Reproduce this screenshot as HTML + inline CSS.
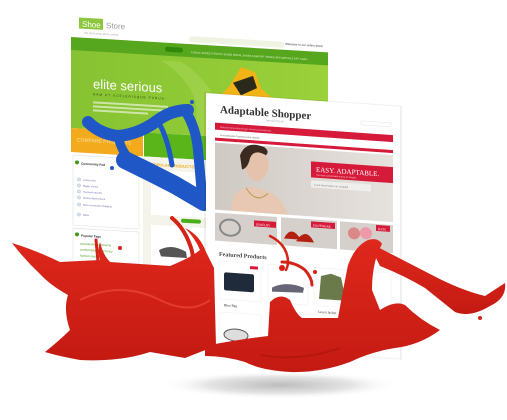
<!DOCTYPE html>
<html><head><meta charset="utf-8"><style>
html,body{margin:0;padding:0;background:#fff;width:507px;height:420px;overflow:hidden}
svg{display:block}
text{font-family:"Liberation Sans",sans-serif}
.sr{font-family:"Liberation Serif",serif}
</style></head><body>
<svg width="507" height="420" viewBox="0 0 507 420" xmlns="http://www.w3.org/2000/svg">
<defs>
<radialGradient id="sh" cx="50%" cy="50%" r="50%"><stop offset="0" stop-color="#bdbdbd"/><stop offset="0.6" stop-color="#e4e4e4"/><stop offset="1" stop-color="#fff" stop-opacity="0"/></radialGradient>
<linearGradient id="gb" x1="0" y1="0" x2="1" y2="0"><stop offset="0" stop-color="#86c232"/><stop offset="1" stop-color="#9bd13a"/></linearGradient>
<linearGradient id="hero" x1="0" y1="0" x2="1" y2="0"><stop offset="0" stop-color="#cfc9c3"/><stop offset="1" stop-color="#e6e2de"/></linearGradient>
<linearGradient id="red" x1="0" y1="0" x2="0" y2="1"><stop offset="0" stop-color="#e0281c"/><stop offset="1" stop-color="#c41a12"/></linearGradient>
</defs>
<ellipse cx="280" cy="385" rx="120" ry="14" fill="url(#sh)"/>

<!-- back page -->
<g transform="matrix(1,0.06,0,1,71,15)">
<rect x="0" y="0" width="257" height="255" fill="#fff"/>
<rect x="8" y="2" width="24" height="11" fill="#8cc63f"/>
<text x="11" y="11" font-size="8" fill="#fff">Shoe</text>
<text x="35" y="11" font-size="8" fill="#999">Store</text>
<text x="13" y="18" font-size="3" fill="#aaa">the best shoe store online</text>
<rect x="118" y="14" width="95" height="6" rx="3" fill="#eef3e2"/>
<text x="214" y="17" font-size="3" fill="#333">Welcome to our online store!</text>
<rect x="0" y="22" width="257" height="16" fill="#56a61e"/>
<rect x="94" y="26" width="18" height="5" rx="2.5" fill="#2f8a0c"/>
<text x="120" y="31" font-size="2.5" fill="#e5f5d0">CASUAL SHOES   ATHLETIC SHOES   BRIDAL SHOES   COMFORT SHOES   NEW ARRIVALS   GIFT CARD</text>
<rect x="0" y="35" width="257" height="78" fill="url(#gb)"/>
<path d="M90,40 Q140,70 120,113 L140,113 Q160,70 110,40Z" fill="#a9d85a" opacity="0.5"/>
<text x="22" y="72" font-size="13" fill="#fff" font-family="DejaVu Sans Condensed, Liberation Sans Narrow, sans-serif">elite serious</text>
<text x="22" y="79" font-size="3.2" fill="#2a4a10" letter-spacing="1">NAM UT SCELERISQUE PURUS.</text>
<rect x="22" y="85" width="75" height="2" fill="#cde6a8"/>
<rect x="22" y="89" width="70" height="2" fill="#cde6a8"/>
<rect x="22" y="93" width="55" height="2" fill="#cde6a8"/>
<path d="M134,110 L142,80 L158,62 L170,42 L184,46 L190,62 L212,80 L205,95 L180,92 L165,110Z" fill="#f2b316"/>
<path d="M162,58 L182,50 L186,62 L170,70Z" fill="#2a2a1a"/>
<rect x="0" y="113" width="72" height="24" fill="#f3aa1c"/>
<rect x="73" y="113" width="70" height="24" fill="#5ab51b"/>
<text x="6" y="126" font-size="5" fill="#fde1a0">COMPARE PRODUCTS</text>
<rect x="72" y="137" width="100" height="120" fill="#f4f4ea"/>
<rect x="2" y="140" width="66" height="70" fill="#fff" stroke="#e2e2e2" stroke-width="0.6"/>
<circle cx="6" cy="147" r="2" fill="#3e9c1a"/>
<text x="10" y="149" font-size="3.2" fill="#333" font-weight="bold">Community Poll</text>
<g fill="#dfe8ef" stroke="#9ab" stroke-width="0.4">
<circle cx="8" cy="164" r="1.6"/><circle cx="8" cy="170" r="1.6"/><circle cx="8" cy="176" r="1.6"/><circle cx="8" cy="182" r="1.6"/><circle cx="8" cy="189" r="1.6"/><circle cx="8" cy="199" r="1.6"/></g>
<g fill="#66a" font-size="2.5"><text x="12" y="165">Lower price</text><text x="12" y="171">Bigger choice</text><text x="12" y="177">Payment security</text><text x="12" y="183">30-day Money Back</text><text x="12" y="190">More convenient shipping</text><text x="12" y="200">Other</text></g>
<rect x="2" y="213" width="66" height="42" fill="#fff" stroke="#e2e2e2" stroke-width="0.6"/>
<circle cx="6" cy="219" r="2" fill="#3e9c1a"/>
<text x="10" y="221" font-size="3.2" fill="#333" font-weight="bold">Popular Tags</text>
<text x="9" y="229" font-size="3" fill="#4a9a1a">accessories community</text>
<text x="9" y="235" font-size="3" fill="#4a9a1a">comfortable shoes fancy</text>
<text x="9" y="241" font-size="3" fill="#4a9a1a">fashion sneakers</text>
<text x="80" y="146" font-size="4" fill="#f3aa1c" font-weight="bold">POPULAR PRODUCTS</text>
<rect x="80" y="150" width="55" height="45" fill="#fff"/>
<rect x="110" y="197" width="20" height="4" rx="2" fill="#4aad1a"/>
<rect x="80" y="205" width="55" height="45" fill="#fff"/>
<path d="M88,230 Q100,222 115,230 L116,236 L90,236Z" fill="#555"/>
</g>

<!-- blue splash -->
<g fill="none" stroke="#1f58c6" stroke-linecap="round" stroke-linejoin="round">
<path d="M88,122 Q100,134 118,136 Q140,134 158,120 Q172,110 188,110" stroke-width="12"/>
<path d="M125,160 Q150,172 175,185 Q192,195 204,202" stroke-width="18"/>
<path d="M186,112 Q196,128 198,150 Q200,172 202,195" stroke-width="10"/>
<path d="M118,135 Q120,150 132,162" stroke-width="9"/>
<path d="M160,125 Q168,140 172,165" stroke-width="5"/>
</g>
<circle cx="192" cy="102" r="2" fill="#1f58c6"/><circle cx="112" cy="168" r="2" fill="#1f58c6"/>

<!-- front page -->
<g transform="matrix(1,0.07,0,1,206,93)">
<rect x="-2" y="-1" width="198" height="254" fill="#000" opacity="0.06"/>
<rect x="0" y="0" width="194" height="252" fill="#fff"/>
<text x="14" y="19" font-size="11" class="sr" fill="#333" font-weight="bold">Adaptable Shopper</text>
<text x="60" y="24" font-size="3" class="sr" fill="#999" font-style="italic">one size fits all</text>
<rect x="155" y="17" width="30" height="4" fill="#fff" stroke="#ddd" stroke-width="0.4"/>
<rect x="9" y="29" width="178" height="7" fill="#d51a3a"/>
<text x="14" y="34" font-size="2.5" fill="#fbd">Watches   Bracelets   Rings   Jewelry   Accessories</text>
<rect x="9" y="44" width="178" height="3" fill="#d51a3a"/>
<text x="14" y="42" font-size="2.3" fill="#666">All   Accessories   Footwear   Hats   Jackets</text>
<rect x="9" y="49" width="178" height="67" fill="url(#hero)"/>
<path d="M38,62 Q48,48 60,58 Q66,70 58,80 Q52,88 44,82 Q38,74 38,62Z" fill="#e4c2ac"/>
<path d="M34,60 Q40,44 58,50 Q64,54 60,58 Q48,52 44,62 Q42,72 36,74Z" fill="#3a2a20"/>
<path d="M28,100 Q40,88 55,92 Q75,96 82,116 L24,116Z" fill="#e8c8b2"/>
<path d="M40,92 Q50,108 62,96" fill="none" stroke="#b89a4a" stroke-width="1"/>
<rect x="105" y="61" width="82" height="16" fill="#d51a3a"/>
<text x="110" y="71" font-size="7" class="sr" fill="#fff">EASY. ADAPTABLE.</text>
<text x="110" y="75" font-size="2.2" fill="#fcc">The most customizable theme for Shopify</text>
<rect x="105" y="80" width="60" height="7" fill="#f0eeec"/>
<text x="108" y="85" font-size="2.6" class="sr" fill="#666">Learn what features are included</text>
<rect x="9" y="119" width="62" height="28" fill="#d5d0cb"/>
<ellipse cx="24" cy="133" rx="10" ry="8" fill="none" stroke="#888" stroke-width="2"/>
<rect x="48" y="124" width="22" height="6" fill="#d51a3a"/>
<text x="50" y="129" font-size="3.2" class="sr" fill="#fff">JEWELRY</text>
<rect x="75" y="119" width="56" height="28" fill="#d5d0cb"/>
<path d="M78,140 Q85,125 95,140Z M90,142 Q100,126 108,142Z" fill="#b32010"/>
<rect x="105" y="121" width="24" height="6" fill="#d51a3a"/>
<text x="107" y="126" font-size="3.2" class="sr" fill="#fff">FOOTWEAR</text>
<rect x="134" y="119" width="53" height="28" fill="#d5d0cb"/>
<circle cx="148" cy="130" r="6" fill="#d88"/><circle cx="160" cy="129" r="6" fill="#e9a"/>
<rect x="170" y="120" width="14" height="6" fill="#d51a3a"/>
<text x="172" y="125" font-size="3.2" class="sr" fill="#fff">HATS</text>
<text x="13" y="162" font-size="6" class="sr" fill="#444" font-weight="bold">Featured Products</text>
<rect x="13" y="167" width="42" height="38" fill="#fff" stroke="#eee" stroke-width="0.5"/>
<rect x="18" y="178" width="30" height="18" rx="2" fill="#1f2a3a"/>
<rect x="62" y="167" width="40" height="38" fill="#fff" stroke="#eee" stroke-width="0.5"/>
<path d="M66,190 Q80,182 98,188 L97,193 L66,194Z" fill="#667"/>
<rect x="108" y="167" width="38" height="38" fill="#fff" stroke="#eee" stroke-width="0.5"/>
<path d="M115,175 L125,172 L135,175 L140,198 L113,198Z" fill="#6a7a4a"/>
<rect x="150" y="167" width="35" height="38" fill="#fff" stroke="#eee" stroke-width="0.5"/>
<text x="18" y="212" font-size="3.5" class="sr" fill="#333">Blue Bag</text>
<text x="112" y="212" font-size="3.5" class="sr" fill="#333">Green Jacket</text>
<rect x="44" y="170" width="8" height="3" fill="#d51a3a"/>
<rect x="13" y="218" width="42" height="32" fill="#fff" stroke="#eee" stroke-width="0.5"/>
<ellipse cx="30" cy="240" rx="12" ry="6" fill="#ddd" stroke="#555" stroke-width="1"/>
</g>

<!-- red splash -->
<g fill="url(#red)">
<path d="M12,243 Q35,250 60,262 L100,260 Q97,250 100,242 Q103,255 110,262 L170,266 Q190,258 200,250 Q195,238 185,228 Q200,235 206,252 L214,268 L216,346 Q200,352 185,358 L150,352 Q120,362 80,360 Q58,356 45,352 Q60,340 70,330 Q63,310 68,295 Q50,285 40,274 Q25,260 12,243Z"/>
<path d="M205,346 Q235,340 268,336 L270,302 Q280,292 290,300 Q296,314 302,318 L338,318 Q343,290 348,265 Q355,246 368,240 Q378,237 382,244 Q372,262 372,290 L380,310 Q395,300 405,305 Q420,320 440,330 Q420,345 395,348 Q370,352 350,362 Q320,373 290,372 Q260,370 245,362 Q225,356 205,356Z"/>
<path d="M368,242 Q395,256 430,274 Q460,290 485,296 L505,283 Q507,298 490,306 Q470,318 455,312 Q440,300 425,288 Q405,276 380,266Z"/>
</g>
<g fill="none" stroke="#d42418" stroke-linecap="round">
<path d="M172,218 Q184,228 190,245 Q194,255 192,262" stroke-width="4"/>
<path d="M270,236 Q282,242 286,252 Q290,262 286,270" stroke-width="2.5"/>
<path d="M282,262 Q295,262 305,270 Q312,278 312,285" stroke-width="3"/>
<path d="M96,240 L98,262" stroke-width="3"/>
</g>
<path d="M80,300 Q120,280 160,300 Q190,315 210,300" fill="none" stroke="#f05040" stroke-width="2" opacity="0.6"/>
<path d="M260,355 Q300,362 340,348" fill="none" stroke="#a51208" stroke-width="2" opacity="0.5"/>
<circle cx="282" cy="268" r="3" fill="#d42418"/><circle cx="315" cy="272" r="2" fill="#d42418"/>
<circle cx="120" cy="248" r="2" fill="#d42418"/><circle cx="480" cy="318" r="2" fill="#d42418"/>
</svg>
</body></html>
